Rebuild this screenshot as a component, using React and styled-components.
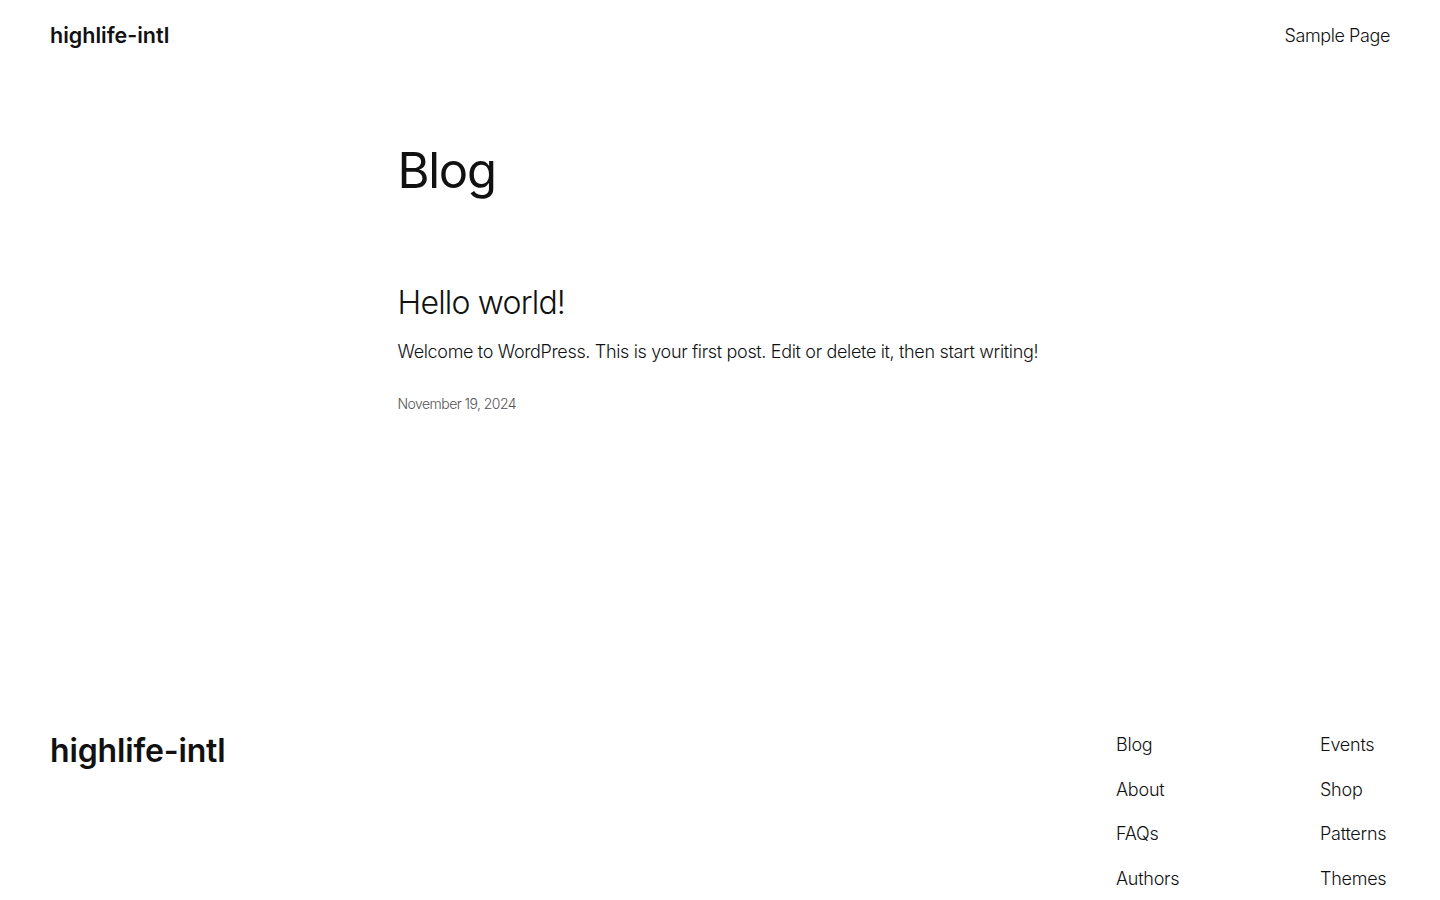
import React from "react";
import styled, { createGlobalStyle } from "styled-components";

const Global = createGlobalStyle`
  html, body { margin: 0; padding: 0; background: #fff; }
  body {
    font-family: Inter, "Noto Sans", sans-serif;
    color: #111;
    -webkit-font-smoothing: antialiased;
  }
  a { color: inherit; text-decoration: none; }
`;

const Page = styled.div`
  min-height: 900px;
  display: flex;
  flex-direction: column;
`;

const Header = styled.header`
  height: 70px;
  flex-shrink: 0;
  padding: 2px 50px 0;
  box-sizing: border-box;
  display: flex;
  align-items: center;
  justify-content: space-between;
`;

const SiteTitle = styled.a`
  font-size: ${(p) => (p.$large ? "32px" : "21.5px")};
  font-weight: 600;
  letter-spacing: ${(p) => (p.$large ? "-0.15px" : "0px")};
  line-height: 1.2;
`;

const NavLink = styled.a`
  font-size: 18px;
  font-weight: 300;
  letter-spacing: -0.4px;
  line-height: 1.4;
`;

const Main = styled.main`
  width: 645px;
  margin: 0 auto;
  padding-top: 72px;
  height: 662px;
  flex-shrink: 0;
  box-sizing: border-box;
`;

const PageHeading = styled.h1`
  margin: 0;
  font-size: 49px;
  font-weight: 400;
  letter-spacing: -1.3px;
  line-height: 1.2;
`;

const Post = styled.article`
  margin-top: 83px;
`;

const PostTitle = styled.h2`
  margin: 0;
  font-size: 32px;
  font-weight: 300;
  letter-spacing: -0.8px;
  line-height: 1.2;
`;

const Excerpt = styled.p`
  margin: 16px 0 0;
  font-size: 18px;
  font-weight: 300;
  letter-spacing: -0.34px;
  line-height: 1.5;
`;

const PostDate = styled.div`
  margin-top: 29px;
  font-size: 14px;
  font-weight: 300;
  letter-spacing: -0.55px;
  color: #555;
  line-height: 1.4;
`;

const Footer = styled.footer`
  padding: 0 50px;
  display: flex;
  justify-content: space-between;
  align-items: flex-start;
`;

const FooterNavs = styled.div`
  display: flex;
`;

const FooterColumn = styled.nav`
  display: flex;
  flex-direction: column;
  gap: 19.5px;
  width: ${(p) => p.$w}px;
  align-items: flex-start;
`;

const FooterLink = styled.a`
  font-size: 18px;
  font-weight: 300;
  letter-spacing: -0.25px;
  line-height: 25px;
`;

const FooterTitleWrap = styled.div`
  padding-top: 0;
`;

export default function App() {
  return (
    <Page>
      <Global />
      <Header>
        <SiteTitle href="#">highlife-intl</SiteTitle>
        <NavLink href="#">Sample Page</NavLink>
      </Header>
      <Main>
        <PageHeading>Blog</PageHeading>
        <Post>
          <PostTitle>Hello world!</PostTitle>
          <Excerpt>
            Welcome to WordPress. This is your first post. Edit or delete it,
            then start writing!
          </Excerpt>
          <PostDate>November 19, 2024</PostDate>
        </Post>
      </Main>
      <Footer>
        <FooterTitleWrap>
          <SiteTitle href="#" $large>
            highlife-intl
          </SiteTitle>
        </FooterTitleWrap>
        <FooterNavs>
          <FooterColumn $w={204}>
            <FooterLink href="#">Blog</FooterLink>
            <FooterLink href="#">About</FooterLink>
            <FooterLink href="#">FAQs</FooterLink>
            <FooterLink href="#">Authors</FooterLink>
          </FooterColumn>
          <FooterColumn $w={70}>
            <FooterLink href="#">Events</FooterLink>
            <FooterLink href="#">Shop</FooterLink>
            <FooterLink href="#">Patterns</FooterLink>
            <FooterLink href="#">Themes</FooterLink>
          </FooterColumn>
        </FooterNavs>
      </Footer>
    </Page>
  );
}
